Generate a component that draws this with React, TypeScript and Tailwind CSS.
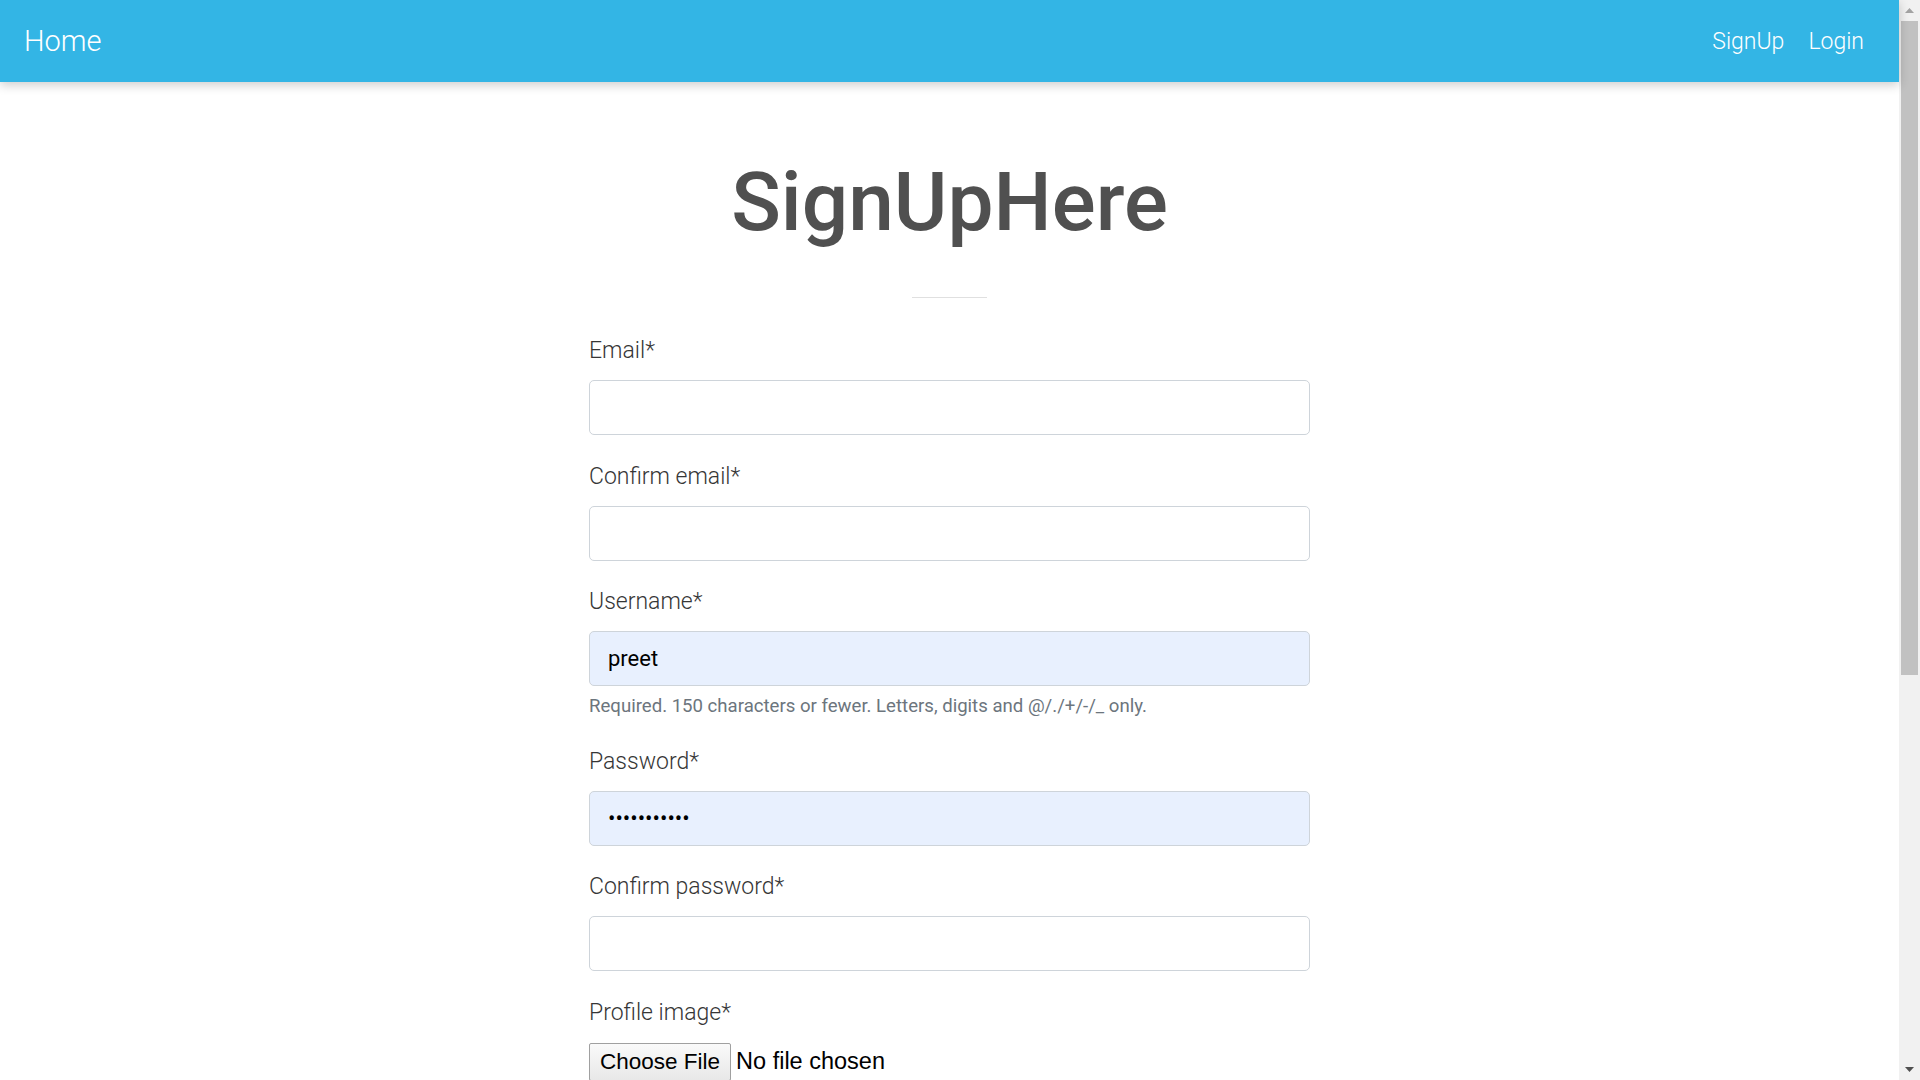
import React from "react";

function Field({
  label,
  value,
  type = "text",
  filled = false,
  help,
}: {
  label: string;
  value?: string;
  type?: string;
  filled?: boolean;
  help?: string;
}) {
  return (
    <div className="mt-[24.5px] first:mt-0">
      <label className="block text-[23px] leading-[33px] font-light text-[#363636]">{label}</label>
      <input
        type={type}
        readOnly
        defaultValue={value}
        className={`mt-[13px] block h-[55px] w-full rounded-[5px] border border-[#ced4da] px-[18px] text-[22px] text-black outline-none ${
          filled ? "bg-[#e8f0fe]" : "bg-white"
        }`}
        style={{ fontFamily: "Roboto, sans-serif" }}
      />
      {help && (
        <div className="mt-[7px] text-[18.6px] leading-[27px] text-[#6c757d]">{help}</div>
      )}
    </div>
  );
}

function Scrollbar() {
  return (
    <aside className="sticky top-0 flex h-screen w-[21px] shrink-0 flex-col bg-[#f1f1f1]">
      <div className="flex h-[21px] items-center justify-center">
        <svg width="9" height="5" viewBox="0 0 9 5">
          <polygon points="0,5 9,5 4.5,0" fill="#a3a3a3" />
        </svg>
      </div>
      <div className="flex-1">
        <div className="mx-[2px] h-[654px] bg-[#c1c1c1]" />
      </div>
      <div className="flex h-[21px] items-center justify-center">
        <svg width="9" height="5" viewBox="0 0 9 5">
          <polygon points="0,0 9,0 4.5,5" fill="#505050" />
        </svg>
      </div>
    </aside>
  );
}

export default function App() {
  return (
    <div className="flex items-start bg-white font-['Roboto',sans-serif]">
      <div className="min-h-[1714px] min-w-0 flex-1">
        <nav className="relative z-10 flex h-[82px] items-center justify-between bg-[#33b5e5] pl-[24px] pr-[35px] shadow-[0_3px_10px_rgba(0,0,0,0.2)]">
          <a className="text-[29px] font-light leading-none text-white">Home</a>
          <div className="flex items-center gap-[24px] text-[23px] font-light leading-none text-white">
            <a>SignUp</a>
            <a>Login</a>
          </div>
        </nav>

        <main className="mx-auto w-[721px] pb-[120px]">
          <h1 className="mt-[71px] text-center text-[82px] font-medium leading-[1.2] text-[#505050]">
            SignUpHere
          </h1>
          <div className="mx-auto mt-[46px] h-px w-[75px] bg-[#e0e0e0]" />

          <form className="mt-[36px]">
            <Field label="Email*" type="email" />
            <Field label="Confirm email*" type="email" />
            <Field
              label="Username*"
              value="preet"
              filled
              help="Required. 150 characters or fewer. Letters, digits and @/./+/-/_ only."
            />
            <Field label="Password*" type="password" value="preetpreet1" filled />
            <Field label="Confirm password*" type="password" />

            <div className="mt-[24.5px]">
              <label className="block text-[23px] leading-[33px] font-light text-[#363636]">Profile image*</label>
              <div className="mt-[14px] flex items-center font-['Liberation_Sans',Arial,sans-serif] text-[22.5px] text-black">
                <span className="rounded-[2px] border border-[#a0a0a0] bg-gradient-to-b from-[#fafafa] to-[#e8e8e8] px-[10px] py-[3px] leading-[30px]">
                  Choose File
                </span>
                <span className="ml-[5px] text-[23.5px]">No file chosen</span>
              </div>
            </div>

            <button
              type="button"
              className="mt-[40px] rounded-[5px] bg-[#33b5e5] px-[24px] py-[10px] text-[20px] text-white"
            >
              Sign Up
            </button>
          </form>
        </main>
      </div>
      <Scrollbar />
    </div>
  );
}
